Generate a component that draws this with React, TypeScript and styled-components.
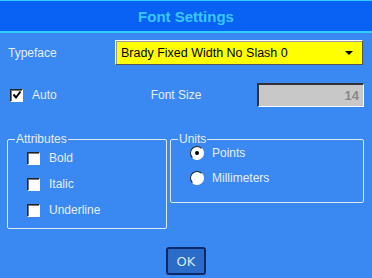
import styled, { createGlobalStyle } from "styled-components";

const Global = createGlobalStyle`
  html, body { margin: 0; padding: 0; }
  body {
    width: 372px;
    height: 278px;
    overflow: hidden;
    background: #3a88f2;
    font-family: "Liberation Sans", Arial, sans-serif;
  }
`;

const Dialog = styled.div`
  width: 372px;
  height: 278px;
  display: flex;
  flex-direction: column;
  background: #3a88f2;
  color: #e6eef8;
  font-size: 12px;
`;

const TitleBar = styled.div`
  height: 30px;
  border-top: 1px solid #33ccff;
  border-bottom: 2px solid #33ccff;
  background: #0a62f5;
  color: #38c8ff;
  font-weight: bold;
  font-size: 15px;
  display: flex;
  align-items: center;
  justify-content: center;
`;

const Body = styled.div`
  flex: 1;
  display: flex;
  flex-direction: column;
  padding: 7px 8px 0 8px;
`;

const Row = styled.div`
  display: flex;
  align-items: center;
`;

const Label = styled.span<{ $w?: number }>`
  width: ${(p) => (p.$w ? `${p.$w}px` : "auto")};
  color: #e6eef8;
`;

const Select = styled.div`
  flex: 1;
  margin-left: 7px;
  margin-right: 1px;
  height: 23px;
  background: #ffff00;
  color: #000;
  font-size: 12.5px;
  border: 1px solid #fff;
  border-right-color: #555;
  border-bottom-color: #555;
  box-shadow: inset 1px 1px 0 #999;
  display: flex;
  align-items: center;
  padding: 0 9px 0 5px;
  justify-content: space-between;
`;

const Arrow = styled.span`
  width: 0;
  height: 0;
  border-left: 4px solid transparent;
  border-right: 4px solid transparent;
  border-top: 4px solid #000;
`;

const Box = styled.span`
  width: 11px;
  height: 11px;
  background: #fff;
  border: 1px solid #fff;
  border-top-color: #222;
  border-left-color: #222;
  box-shadow: inset 1px 1px 0 #777;
  display: inline-flex;
  align-items: center;
  justify-content: center;
  flex-shrink: 0;
`;

const Radio = styled.span<{ $on?: boolean }>`
  width: 12px;
  height: 12px;
  border-radius: 50%;
  background: #fff;
  border: 1px solid #fff;
  border-top-color: #222;
  border-left-color: #222;
  display: inline-flex;
  align-items: center;
  justify-content: center;
  flex-shrink: 0;
  &::after {
    content: "";
    display: ${(p) => (p.$on ? "block" : "none")};
    width: 4px;
    height: 4px;
    border-radius: 50%;
    background: #000;
  }
`;

const Check = styled.label<{ $gap?: number; $h?: number }>`
  display: flex;
  align-items: center;
  gap: ${(p) => p.$gap ?? 9}px;
  height: ${(p) => p.$h ?? 26}px;
`;

const SizeRow = styled(Row)`
  margin-top: 17px;
  padding-left: 2px;
`;

const SizeInput = styled.div`
  box-sizing: border-box;
  margin-left: auto;
  width: 107px;
  height: 24px;
  background: #c8c8c8;
  border: 1px solid #fff;
  border-top: 2px solid #333;
  border-left: 2px solid #333;
  color: #888;
  font-weight: bold;
  font-size: 13px;
  display: flex;
  align-items: center;
  justify-content: flex-end;
  padding-right: 4px;
`;

const Groups = styled.div`
  display: flex;
  gap: 3px;
  margin-top: 25px;
  margin-left: -1px;
  align-items: flex-start;
`;

const Group = styled.fieldset<{ $w: number; $h: number; $top: number }>`
  margin: 0;
  width: ${(p) => p.$w}px;
  height: ${(p) => p.$h}px;
  box-sizing: border-box;
  border: 1px solid #e0e8f0;
  border-radius: 2px;
  padding: 0 0 0 19px;
  display: flex;
  flex-direction: column;
  legend {
    padding: 0 1px;
    margin-left: -12px;
    color: #e6eef8;
    line-height: 12px;
  }
  & > label:first-of-type {
    margin-top: ${(p) => p.$top}px;
  }
`;

const OkRow = styled.div`
  margin-top: auto;
  margin-bottom: 3px;
  display: flex;
  justify-content: center;
`;

const OkButton = styled.button`
  width: 40px;
  height: 28px;
  background: #2a6cc8;
  border: 2px solid #0c2a6a;
  border-radius: 3px;
  color: #d8e8f8;
  font-family: "DejaVu Sans", sans-serif;
  font-size: 13px;
  padding: 0;
`;

const Tick = () => (
  <svg width="10" height="10" viewBox="0 0 10 10">
    <path d="M1.5 4.5 L4 7.5 L8.5 1.5" stroke="#000" strokeWidth="2" fill="none" />
  </svg>
);

export default function App() {
  return (
    <Dialog>
      <Global />
      <TitleBar>Font Settings</TitleBar>
      <Body>
        <Row>
          <Label $w={100}>Typeface</Label>
          <Select>
            <span>Brady Fixed Width No Slash 0</span>
            <Arrow />
          </Select>
        </Row>
        <SizeRow>
          <Check $gap={9}>
            <Box>
              <Tick />
            </Box>
            <span>Auto</span>
          </Check>
          <Label style={{ marginLeft: 94 }}>Font Size</Label>
          <SizeInput>14</SizeInput>
        </SizeRow>
        <Groups>
          <Group $w={160} $h={96} $top={0}>
            <legend>Attributes</legend>
            <Check>
              <Box />
              <span>Bold</span>
            </Check>
            <Check>
              <Box />
              <span>Italic</span>
            </Check>
            <Check>
              <Box />
              <span>Underline</span>
            </Check>
          </Group>
          <Group $w={194} $h={70} $top={-5}>
            <legend>Units</legend>
            <Check $gap={8} $h={25}>
              <Radio $on />
              <span>Points</span>
            </Check>
            <Check $gap={8} $h={25}>
              <Radio />
              <span>Millimeters</span>
            </Check>
          </Group>
        </Groups>
        <OkRow>
          <OkButton>OK</OkButton>
        </OkRow>
      </Body>
    </Dialog>
  );
}
